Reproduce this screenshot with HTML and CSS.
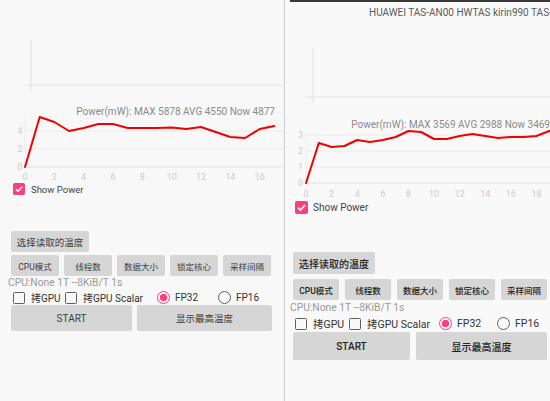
FILE: index.html
```html
<!DOCTYPE html>
<html lang="zh">
<head>
<meta charset="utf-8">
<title>Power monitor</title>
<link rel="stylesheet" href="styles.css">
</head>
<body>
<div class="screens">
  <section class="panel panel-a">
    <svg class="chart" width="283" height="182" viewBox="0 0 283 182">
      <line class="axis" x1="31" y1="40" x2="31" y2="92"/>
      <line class="axis" x1="25" y1="85" x2="283" y2="85"/>
      <text class="desc" x="275" y="115">Power(mW): MAX 5878 AVG 4550 Now 4877</text>
      <line class="grid" x1="25" y1="131" x2="283" y2="131"/>
      <line class="grid" x1="25" y1="149" x2="283" y2="149"/>
      <line class="axis" x1="25" y1="167" x2="283" y2="167"/>
      <line class="grid" x1="25" y1="117" x2="25" y2="167"/>
      <text class="tick" x="20" y="134.2">4</text>
      <text class="tick" x="20" y="152.2">2</text>
      <text class="tick" x="20" y="170.2">0</text>
      <text class="tick" x="25" y="179.5">0</text>
      <text class="tick" x="54.3" y="179.5">2</text>
      <text class="tick" x="83.7" y="179.5">4</text>
      <text class="tick" x="113" y="179.5">6</text>
      <text class="tick" x="142.3" y="179.5">8</text>
      <text class="tick" x="171.7" y="179.5">10</text>
      <text class="tick" x="201" y="179.5">12</text>
      <text class="tick" x="230.3" y="179.5">14</text>
      <text class="tick" x="259.7" y="179.5">16</text>
      <polyline class="power" points="25,167 39.7,117 54.3,122 69,131 83.7,128 98.3,124 113,124 127.7,128 142.3,128 157,128 171.7,127.5 186.3,129 201,127 215.7,132 230.3,137 245,138 259.7,129 274.3,126"/>
    </svg>
    <div class="check show-power">
      <span class="box checked"><svg viewBox="0 0 12 12" width="10" height="10"><path d="M2.2 6.2 L4.9 8.8 L9.8 3.3" fill="none" stroke="#fff" stroke-width="1.7"/></svg></span>
      <span>Show Power</span>
    </div>
    <div class="controls">
      <button class="btn pick">选择读取的温度</button>
      <div class="btn-row">
        <button class="btn">CPU模式</button>
        <button class="btn">线程数</button>
        <button class="btn">数据大小</button>
        <button class="btn">锁定核心</button>
        <button class="btn">采样间隔</button>
      </div>
      <div class="status">CPU:None 1T --8KiB/T 1s</div>
      <div class="opts">
        <span class="opt opt-1"><span class="box"></span>拷GPU</span>
        <span class="opt opt-2"><span class="box"></span>拷GPU Scalar</span>
        <span class="radios">
          <span class="radio"><span class="dot on"></span>FP32</span>
          <span class="radio"><span class="dot"></span>FP16</span>
        </span>
      </div>
      <div class="action-row">
        <button class="btn start">START</button>
        <button class="btn max">显示最高温度</button>
      </div>
    </div>
  </section>
  <div class="divider"></div>
  <section class="panel panel-b">
    <div class="strip"></div>
    <div class="device">HUAWEI TAS-AN00 HWTAS kirin990 TAS-AN00</div>
    <svg class="chart" width="265" height="176" viewBox="0 0 265 176">
      <line class="axis" x1="28" y1="24" x2="28" y2="79"/>
      <line class="axis" x1="20" y1="73" x2="265" y2="73"/>
      <text class="desc" x="265" y="104">Power(mW): MAX 3569 AVG 2988 Now 3469</text>
      <line class="grid" x1="21" y1="111" x2="265" y2="111"/>
      <line class="grid" x1="21" y1="127" x2="265" y2="127"/>
      <line class="grid" x1="21" y1="143" x2="265" y2="143"/>
      <line class="axis" x1="21" y1="159" x2="265" y2="159"/>
      <line class="grid" x1="21" y1="106" x2="21" y2="159"/>
      <text class="tick" x="15.5" y="114.2">3</text>
      <text class="tick" x="15.5" y="130.2">2</text>
      <text class="tick" x="15.5" y="146.2">1</text>
      <text class="tick" x="15.5" y="162.2">0</text>
      <text class="tick" x="21" y="172.5">0</text>
      <text class="tick" x="46.6" y="172.5">2</text>
      <text class="tick" x="72.2" y="172.5">4</text>
      <text class="tick" x="97.8" y="172.5">6</text>
      <text class="tick" x="123.4" y="172.5">8</text>
      <text class="tick" x="149" y="172.5">10</text>
      <text class="tick" x="174.6" y="172.5">12</text>
      <text class="tick" x="200.2" y="172.5">14</text>
      <text class="tick" x="225.8" y="172.5">16</text>
      <text class="tick" x="251.4" y="172.5">18</text>
      <polyline class="power" points="21,159 33.8,119 46.6,123 59.4,122 72.2,116 85,118 97.8,116 110.6,113 123.4,107 136.2,108 149,115 161.8,115 174.6,112 187.4,110 200.2,112 213,114 225.8,113 238.6,113 251.4,112 264.2,107 270,106"/>
    </svg>
    <div class="check show-power">
      <span class="box checked"><svg viewBox="0 0 12 12" width="11" height="11"><path d="M2.2 6.2 L4.9 8.8 L9.8 3.3" fill="none" stroke="#fff" stroke-width="1.7"/></svg></span>
      <span>Show Power</span>
    </div>
    <div class="controls">
      <button class="btn pick">选择读取的温度</button>
      <div class="btn-row">
        <button class="btn">CPU模式</button>
        <button class="btn">线程数</button>
        <button class="btn">数据大小</button>
        <button class="btn">锁定核心</button>
        <button class="btn">采样间隔</button>
      </div>
      <div class="status">CPU:None 1T --8KiB/T 1s</div>
      <div class="opts">
        <span class="opt opt-1"><span class="box"></span>拷GPU</span>
        <span class="opt opt-2"><span class="box"></span>拷GPU Scalar</span>
        <span class="radios">
          <span class="radio"><span class="dot on"></span>FP32</span>
          <span class="radio"><span class="dot"></span>FP16</span>
        </span>
      </div>
      <div class="action-row">
        <button class="btn start">START</button>
        <button class="btn max">显示最高温度</button>
      </div>
    </div>
  </section>
</div>
</body>
</html>
```

FILE: styles.css
```css
* { box-sizing: border-box; }
html, body { margin: 0; padding: 0; }
body {
  width: 550px;
  height: 401px;
  overflow: hidden;
  background: #f8f8f8;
  font-family: Roboto, "Noto Sans CJK SC", sans-serif;
  color: #333;
}
.screens { display: flex; height: 401px; }
.panel { overflow: hidden; background: #f8f8f8; height: 401px; }
.panel-a { width: 283px; flex: none; }
.divider { width: 1px; margin-left: 1px; background: #cdcdcd; flex: none; }
.panel-b { flex: 1; background: #f9f9f9; }

.strip { height: 2px; margin-left: 5px; background: #383838; }
.device {
  height: 22px;
  line-height: 22px;
  padding-left: 84px;
  font-size: 10px;
  color: #5a5a5a;
  white-space: nowrap;
  overflow: hidden;
}

.chart { display: block; overflow: hidden; }
.axis { stroke: #e1e1e1; stroke-width: 1; }
.grid { stroke: #ececec; stroke-width: 1; }
.desc { font-size: 10px; fill: #8a8a8a; text-anchor: end; }
.tick { font-size: 9px; fill: #cccccc; text-anchor: middle; }
.power { fill: none; stroke: #f20000; stroke-width: 2; stroke-linejoin: round; stroke-linecap: round; }

.check { display: flex; align-items: center; }
.show-power { height: 14px; padding-left: 13px; gap: 6px; font-size: 9.5px; color: #444; }
.panel-b .show-power { padding-left: 10px; gap: 5px; font-size: 10px; }

.box {
  flex: none;
  width: 12px;
  height: 12px;
  border: 1.5px solid #5f5f5f;
  border-radius: 1.5px;
}
.box.checked {
  display: flex;
  align-items: center;
  justify-content: center;
  background: #f4437e;
  border-color: #f4437e;
}
.panel-b .box.checked { width: 13px; height: 13px; }

.controls { margin-top: 35px; }
.panel-b .controls { margin-top: 38px; }

.btn {
  display: flex;
  align-items: center;
  justify-content: center;
  border: 0;
  padding: 0;
  margin: 0;
  background: #d6d6d6;
  border-radius: 2px;
  font-family: inherit;
  color: #3c3c3c;
  white-space: nowrap;
}
.panel-b .btn { color: #222; font-weight: 500; }

.pick { width: 78px; height: 21px; margin-left: 11px; font-size: 9.5px; }
.panel-b .pick { width: 82px; height: 22px; margin-left: 8px; font-size: 10px; }

.btn-row { display: flex; gap: 5px; margin: 3px 0 0 11px; }
.btn-row .btn { width: 48px; height: 21px; font-size: 8.5px; }
.panel-b .btn-row { gap: 6px; margin: 5px 0 0 8px; }
.panel-b .btn-row .btn { width: 46px; }

.status {
  height: 14px;
  line-height: 14px;
  padding-left: 8px;
  font-size: 10.3px;
  color: #9a9a9a;
  white-space: nowrap;
}
.panel-b .status { height: 16px; line-height: 16px; padding-left: 5px; }

.opts {
  display: flex;
  align-items: center;
  height: 15px;
  padding-left: 13px;
  font-size: 10px;
  color: #333;
  white-space: nowrap;
}
.panel-b .opts { padding-left: 10px; font-size: 10.5px; }
.opt { display: flex; align-items: center; gap: 6px; flex: none; }
.opt-1 { width: 52px; }
.opt-2 { width: 85px; }
.panel-b .opt-1 { width: 54px; }
.panel-b .opt-2 { width: 82px; }

.radios { display: flex; }
.radio { display: flex; align-items: center; gap: 5px; width: 61px; padding-left: 7px; }
.panel-b .radio { width: 58px; padding-left: 8px; }
.dot {
  flex: none;
  width: 13px;
  height: 13px;
  border: 1.5px solid #5f5f5f;
  border-radius: 50%;
}
.dot.on {
  border-color: #f4437e;
  background: radial-gradient(circle, #f4437e 0 3.4px, transparent 3.9px);
}

.action-row { display: flex; gap: 5px; margin-left: 11px; }
.start { width: 121px; height: 26px; font-size: 10px; }
.max { width: 135px; height: 26px; font-size: 9.5px; }
.panel-b .action-row { gap: 6px; margin: 1px 0 0 8px; }
.panel-b .start { width: 117px; height: 28px; font-size: 10px; }
.panel-b .max { width: 131px; height: 28px; font-size: 10px; }
```
